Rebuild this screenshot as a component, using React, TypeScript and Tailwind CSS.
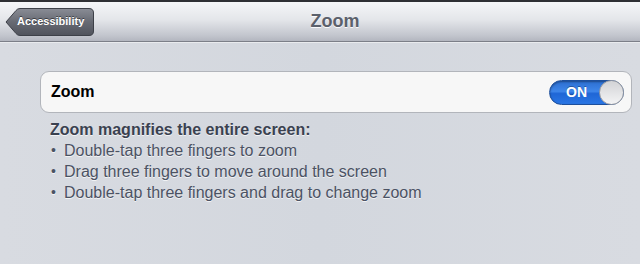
import React from "react";

export default function App() {
  const font = { fontFamily: '"Liberation Sans", Arial, sans-serif' };
  return (
    <div
      className="w-[640px] h-[264px] overflow-hidden bg-[linear-gradient(90deg,#d8dbe1,#d3d7de_50%,#d8dbe1)]"
      style={font}
    >
      {/* top dark strip */}
      <div className="h-[2px] bg-[#2f3034]" />
      {/* nav bar */}
      <div className="relative h-[40px] bg-[linear-gradient(180deg,#f5f6f8_0%,#e4e6ea_45%,#c3c6ce_85%,#b3b6bf_100%)] border-b border-[#7c7f88] flex items-center">
        <div className="relative ml-[5px] h-[28px] w-[89px] flex items-center">
          <svg
            className="absolute inset-0"
            width="89"
            height="28"
            viewBox="0 0 89 28"
          >
            <defs>
              <linearGradient id="bb" x1="0" y1="0" x2="0" y2="1">
                <stop offset="0" stopColor="#8a8d96" />
                <stop offset="0.5" stopColor="#676a73" />
                <stop offset="1" stopColor="#50535c" />
              </linearGradient>
            </defs>
            <path
              d="M1 14 L11 2.5 Q12.5 0.5 15 0.5 L84 0.5 Q88.5 0.5 88.5 5 L88.5 23 Q88.5 27.5 84 27.5 L15 27.5 Q12.5 27.5 11 25.5 Z"
              fill="url(#bb)"
              stroke="#3d4048"
              strokeWidth="1"
            />
          </svg>
          <span className="relative pl-[12px] text-[11px] font-bold text-white [text-shadow:0_-1px_0_rgba(0,0,0,0.5)]">
            Accessibility
          </span>
        </div>
        <div className="absolute inset-0 flex items-center justify-center pl-[30px] pointer-events-none">
          <span className="text-[18px] font-bold text-[#5b606b] [text-shadow:0_1px_0_rgba(255,255,255,0.9)]">
            Zoom
          </span>
        </div>
      </div>
      <div className="h-px bg-[#e9ebee]" />

      {/* content */}
      <div className="pl-[40px] pr-[8px] pt-[28px]">
        <div className="h-[42px] rounded-[9px] border border-[#b2b5bb] bg-[#f7f7f7] flex items-center justify-between pl-[10px] pr-[7px]">
          <span className="text-[16px] font-bold text-black">Zoom</span>
          <div className="relative w-[75px] h-[25px] rounded-full border border-[#1d4f9c] bg-[linear-gradient(180deg,#2c6ed0_0%,#3e86ea_45%,#1f66d6_55%,#2a76e4_100%)] flex items-center shadow-[inset_0_1px_2px_rgba(0,0,0,0.35)]">
            <span className="pl-[16px] text-[14px] font-bold text-white [text-shadow:0_-1px_0_rgba(0,0,0,0.3)]">
              ON
            </span>
            <div className="absolute right-[-1px] top-[-1px] w-[25px] h-[25px] rounded-full border border-[#9a9ca2] bg-[linear-gradient(180deg,#d2d3d6,#f4f4f5)]" />
          </div>
        </div>

        <div className="mt-[6px] pl-[10px] text-[16px] leading-[21px] [text-shadow:0_1px_0_rgba(255,255,255,0.7)]">
          <div className="font-bold text-[#3a4150]">Zoom magnifies the entire screen:</div>
          {[
            "Double-tap three fingers to zoom",
            "Drag three fingers to move around the screen",
            "Double-tap three fingers and drag to change zoom",
          ].map((t) => (
            <div key={t} className="flex text-[#4b5263]">
              <span className="w-[14px] pl-[1px] text-[14px]">•</span>
              <span>{t}</span>
            </div>
          ))}
        </div>
      </div>
    </div>
  );
}
